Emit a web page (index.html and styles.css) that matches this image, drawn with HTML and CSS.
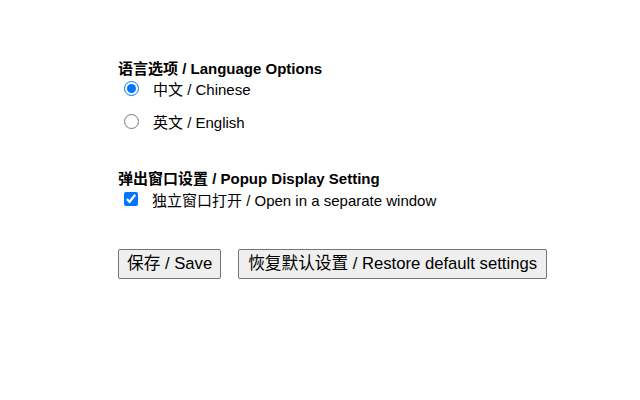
FILE: index.html
```html
<!DOCTYPE html>
<html lang="zh-CN">
<head>
<meta charset="utf-8">
<title>Options</title>
<link rel="stylesheet" href="styles.css">
</head>
<body>
<div class="page">
  <section class="group">
    <div class="group-title">语言选项 / Language Options</div>
    <div class="options options-lang">
      <label class="row"><input class="ctl radio" type="radio" name="lang" checked><span>中文 / Chinese</span></label>
      <label class="row"><input class="ctl radio" type="radio" name="lang"><span>英文 / English</span></label>
    </div>
  </section>
  <section class="group group-popup">
    <div class="group-title">弹出窗口设置 / Popup Display Setting</div>
    <div class="options">
      <label class="row"><input class="ctl check" type="checkbox" checked><span>独立窗口打开 / Open in a separate window</span></label>
    </div>
  </section>
  <div class="actions">
    <button class="btn" type="button">保存 / Save</button>
    <button class="btn btn-wide" type="button">恢复默认设置 / Restore default settings</button>
  </div>
</div>
</body>
</html>
```
FILE: styles.css
```css
html, body {
  margin: 0;
  background: #ffffff;
}
body {
  font-family: "Liberation Sans", Arial, "Noto Sans CJK SC", sans-serif;
  color: #000000;
}
.page {
  padding: 60px 0 0 118px;
}
.group-title {
  font-size: 15px;
  font-weight: bold;
  line-height: 18px;
}
.options {
  display: flex;
  flex-direction: column;
  gap: 11px;
}
.options-lang {
  margin-top: -1px;
}
.row {
  display: flex;
  align-items: center;
  height: 22px;
  font-size: 15px;
}
.ctl {
  margin: 0 14px 0 6px;
  width: 14px;
  height: 14px;
}
.radio {
  width: 15px;
  height: 15px;
}
.group-popup {
  margin-top: 38px;
}
.actions {
  display: flex;
  gap: 17px;
  margin-top: 39px;
}
.btn {
  font-family: "Liberation Sans", Arial, "Noto Sans CJK SC", sans-serif;
  font-size: 16.67px;
  line-height: 18px;
  padding: 5px 8px;
  height: 30px;
  border: 1px solid #767676;
  border-radius: 2px;
  background: #efefef;
  color: #000000;
}
.btn-wide {
  padding: 5px 9px;
}
```
